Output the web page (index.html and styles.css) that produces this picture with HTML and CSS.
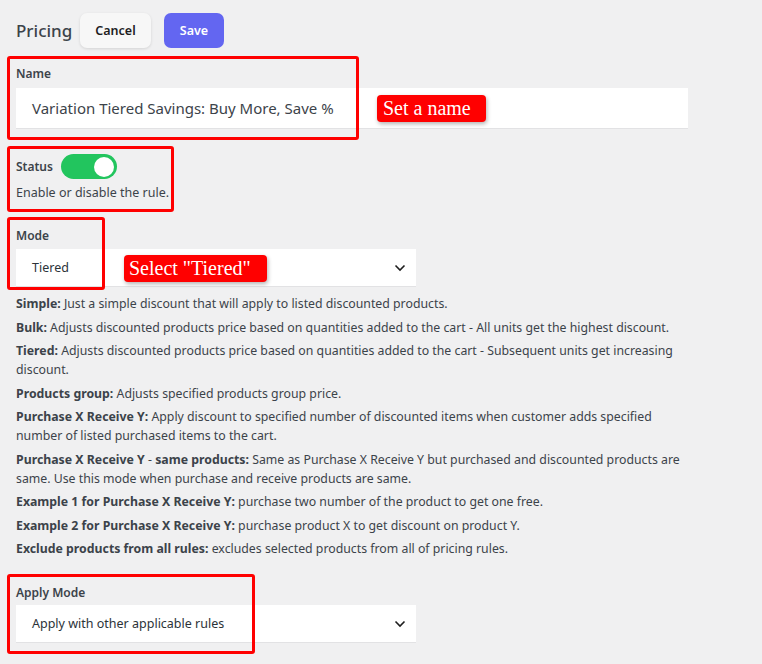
FILE: index.html
```html
<!DOCTYPE html>
<html lang="en">
<head>
<meta charset="utf-8">
<title>Pricing</title>
<link rel="stylesheet" href="styles.css">
</head>
<body>
<div class="page">
  <header class="topbar">
    <h1 class="title">Pricing</h1>
    <button class="btn btn-cancel">Cancel</button>
    <button class="btn btn-save">Save</button>
  </header>

  <section class="field field-name">
    <label class="label">Name</label>
    <div class="input">Variation Tiered Savings: Buy More, Save %</div>
  </section>

  <section class="field field-status">
    <div class="status-row">
      <span class="label">Status</span>
      <span class="toggle"><span class="knob"></span></span>
    </div>
    <p class="help">Enable or disable the rule.</p>
  </section>

  <section class="field field-mode">
    <label class="label">Mode</label>
    <div class="select">
      <span>Tiered</span>
      <svg class="chev" width="12" height="8" viewBox="0 0 12 8"><path d="M1.5 1.5 L6 6 L10.5 1.5" fill="none" stroke="#1e1e1e" stroke-width="1.6"/></svg>
    </div>
    <div class="desc">
      <p><b>Simple:</b> Just a simple discount that will apply to listed discounted products.</p>
      <p><b>Bulk:</b> Adjusts discounted products price based on quantities added to the cart - All units get the highest discount.</p>
      <p><b>Tiered:</b> Adjusts discounted products price based on quantities added to the cart - Subsequent units get increasing discount.</p>
      <p><b>Products group:</b> Adjusts specified products group price.</p>
      <p><b>Purchase X Receive Y:</b> Apply discount to specified number of discounted items when customer adds specified number of listed purchased items to the cart.</p>
      <p><b>Purchase X Receive Y</b> - <b>same products:</b> Same as Purchase X Receive Y but purchased and discounted products are same. Use this mode when purchase and receive products are same.</p>
      <p><b>Example 1 for Purchase X Receive Y:</b> purchase two number of the product to get one free.</p>
      <p><b>Example 2 for Purchase X Receive Y:</b> purchase product X to get discount on product Y.</p>
      <p><b>Exclude products from all rules:</b> excludes selected products from all of pricing rules.</p>
    </div>
  </section>

  <section class="field field-apply">
    <label class="label">Apply Mode</label>
    <div class="select">
      <span>Apply with other applicable rules</span>
      <svg class="chev" width="12" height="8" viewBox="0 0 12 8"><path d="M1.5 1.5 L6 6 L10.5 1.5" fill="none" stroke="#1e1e1e" stroke-width="1.6"/></svg>
    </div>
  </section>
</div>

<div class="mark mark-name"></div>
<div class="mark mark-status"></div>
<div class="mark mark-mode"></div>
<div class="mark mark-apply"></div>
<div class="badge badge-name">Set a name</div>
<div class="badge badge-mode">Select "Tiered"</div>
</body>
</html>
```

FILE: styles.css
```css
* { box-sizing: border-box; }
html, body {
  margin: 0;
  padding: 0;
  background: #f0f0f1;
}
body {
  font-family: "Noto Sans", "Open Sans", sans-serif;
  color: #3c434a;
  font-size: 13px;
  position: relative;
  min-height: 664px;
}
.page {
  padding: 13px 0 0 16px;
  width: 688px;
}
.topbar {
  display: flex;
  align-items: center;
  height: 35px;
}
.title {
  margin: 0 8px 0 0;
  font-size: 17px;
  font-weight: 500;
  color: #3c434a;
  width: 56px;
  white-space: nowrap;
}
.btn {
  font-family: "Noto Sans", sans-serif;
  font-size: 12.5px;
  font-weight: 600;
  height: 35px;
  border: none;
  border-radius: 7px;
  padding: 0;
  cursor: pointer;
}
.btn-cancel {
  background: #f7f7f7;
  color: #1d1d1f;
  box-shadow: 0 1px 3px rgba(0,0,0,0.12);
  width: 71px;
  margin-right: 13px;
}
.btn-save {
  background: #6366f1;
  color: #fff;
  width: 60px;
}
.label {
  display: block;
  font-size: 12px;
  font-weight: 600;
  color: #3c434a;
  line-height: 16px;
}
.field-name { margin-top: 18px; }
.field-name .label { margin-bottom: 6px; }
.input {
  background: #fff;
  height: 41px;
  border-bottom: 1px solid #e2e2e4;
  padding: 0 16px;
  font-size: 15px;
  line-height: 40px;
  color: #3c434a;
}
.field-status { margin-top: 25px; }
.status-row {
  display: flex;
  align-items: center;
  gap: 8px;
  height: 25px;
}
.toggle {
  width: 56px;
  height: 25px;
  border-radius: 13px;
  background: #22c55e;
  display: flex;
  align-items: center;
  justify-content: flex-end;
  padding-right: 3px;
}
.knob {
  width: 20px;
  height: 20px;
  border-radius: 50%;
  background: #fff;
}
.help {
  margin: 5px 0 0;
  line-height: 17px;
  font-size: 12.5px;
}
.field-mode { margin-top: 27px; }
.field-mode .label { margin-bottom: 5px; }
.select {
  background: #fff;
  width: 400px;
  height: 38px;
  border-bottom: 1px solid #e2e2e4;
  display: flex;
  align-items: center;
  justify-content: space-between;
  padding: 0 10px 0 16px;
  font-size: 12.5px;
  color: #2c3338;
}
.chev { display: block; }
.desc { margin-top: 7px; }
.desc p {
  margin: 0 0 4.5px;
  line-height: 19px;
  font-size: 12.3px;
  color: #3c434a;
}
.desc b { font-weight: 700; }
.field-apply { margin-top: 27px; }
.field-apply .label { margin-bottom: 4px; }

.mark {
  position: absolute;
  border: 3px solid #ff0000;
  border-radius: 3px;
}
.mark-name { left: 7px; top: 56px; width: 352px; height: 84px; }
.mark-status { left: 7px; top: 146px; width: 167px; height: 66px; }
.mark-mode { left: 7px; top: 217px; width: 98px; height: 73px; }
.mark-apply { left: 7px; top: 574px; width: 248px; height: 80px; }

.badge {
  position: absolute;
  background: #ff0000;
  color: #fff;
  font-family: "Liberation Serif", serif;
  font-size: 20px;
  line-height: 27px;
  height: 27px;
  border-radius: 4px;
  box-shadow: 1px 2px 4px rgba(0,0,0,0.3);
  white-space: nowrap;
}
.badge-name { left: 377px; top: 95px; width: 109px; padding-left: 6px; }
.badge-mode { left: 124px; top: 255px; width: 143px; padding-left: 5px; }
```
